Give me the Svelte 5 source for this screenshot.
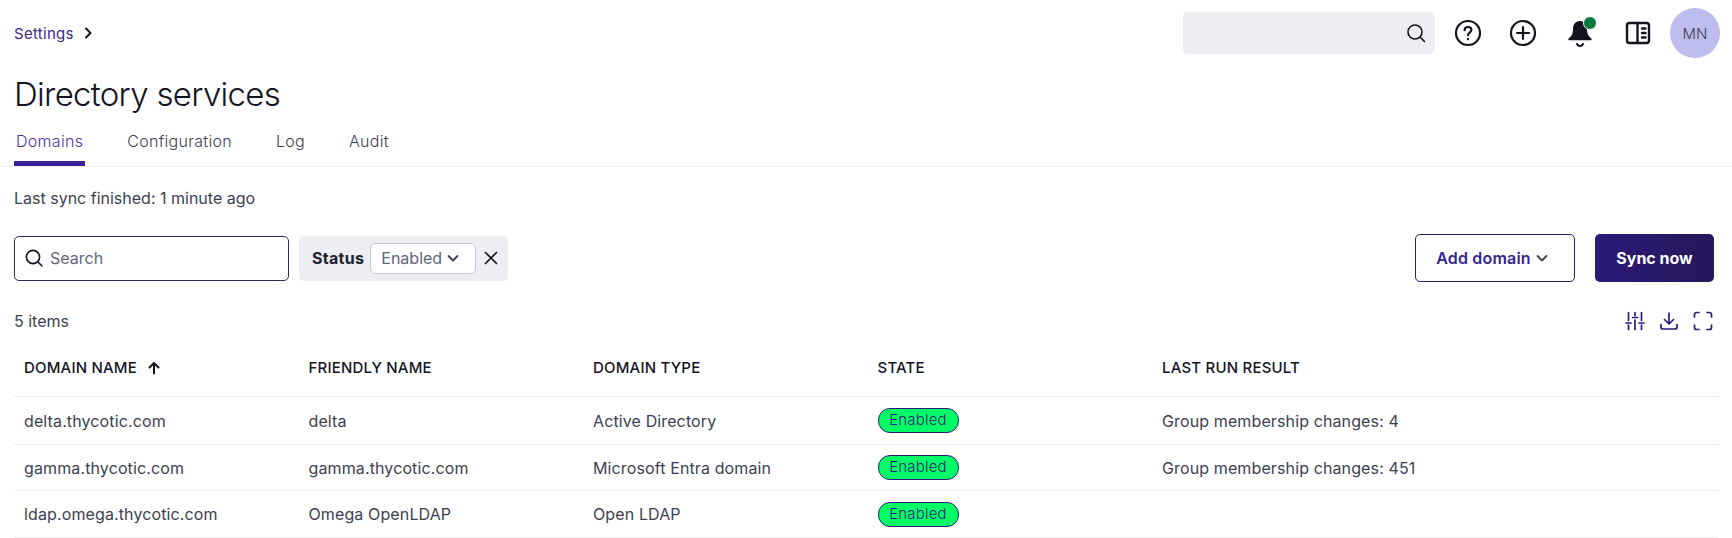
<script>
    let tabs = ["Domains", "Configuration", "Log", "Audit"];

    let columns = ["Domain name", "Friendly name", "Domain type", "State", "Last run result"];

    let domains = [
        { name: "delta.thycotic.com", friendly: "delta", type: "Active Directory", result: "Group membership changes: 4" },
        { name: "gamma.thycotic.com", friendly: "gamma.thycotic.com", type: "Microsoft Entra domain", result: "Group membership changes: 451" },
        { name: "ldap.omega.thycotic.com", friendly: "Omega OpenLDAP", type: "Open LDAP", result: "" }
    ];
</script>

<div class="page">
    <header class="top">
        <nav class="crumbs">
            <a href="#settings">Settings</a>
            <svg width="16" height="16" viewBox="0 0 16 16" fill="none" stroke="#14141f" stroke-width="2" stroke-linecap="round" stroke-linejoin="round"><path d="M6 3.500 10.500 8 6 12.500"/></svg>
        </nav>
        <div class="top-tools">
            <div class="global-search">
                <svg width="22" height="22" viewBox="0 0 22 22" fill="none" stroke="#14141f" stroke-width="1.600" stroke-linecap="round"><circle cx="10" cy="10" r="7"/><path d="m15 15 4.500 4.500"/></svg>
            </div>
            <button class="icon-btn help" aria-label="Help">
                <svg width="28" height="28" viewBox="0 0 28 28" fill="none" stroke="#14141f" stroke-width="2.200" stroke-linecap="round"><circle cx="14" cy="14" r="12"/><path d="M10.600 11.200c0-2 1.500-3.200 3.400-3.200s3.400 1.200 3.400 3c0 2.600-3.400 2.700-3.400 5.200"/><path d="M14 20v.1" stroke-width="2.400"/></svg>
            </button>
            <button class="icon-btn add" aria-label="Add">
                <svg width="28" height="28" viewBox="0 0 28 28" fill="none" stroke="#14141f" stroke-width="2.200" stroke-linecap="round"><circle cx="14" cy="14" r="12"/><path d="M14 8v12M8 14h12"/></svg>
            </button>
            <button class="icon-btn bell" aria-label="Notifications">
                <svg width="28" height="30" viewBox="0 0 28 30" fill="#14141f"><path d="M13 3c-4.800 0-7 3.800-7 8 0 5-1.500 7.200-4.300 9.400-.8.700-.4 1.800.7 1.800h21.200c1.100 0 1.500-1.100.7-1.800C21.500 18.200 20 16 20 11c0-4.200-2.200-8-7-8Z"/><path d="M10 26c.6 1.400 1.600 2 3 2s2.400-.6 3-2" fill="none" stroke="#14141f" stroke-width="2" stroke-linecap="round"/></svg>
                <span class="dot"></span>
            </button>
            <button class="icon-btn panel" aria-label="Panel">
                <svg width="28" height="28" viewBox="0 0 28 28" fill="none" stroke="#14141f" stroke-width="2.400" stroke-linecap="round"><rect x="3" y="4" width="22" height="20" rx="2.500"/><path d="M13.500 4v20"/><path d="M18 9.500h3.500M18 14h3.500M18 18.500h3.500"/></svg>
            </button>
            <div class="avatar">MN</div>
        </div>
    </header>

    <h1>Directory services</h1>

    <div class="tabs">
        {#each tabs as tab, i}
            <div class="tab" class:active={i === 0}>{tab}</div>
        {/each}
    </div>

    <p class="sync-note">Last sync finished: 1 minute ago</p>

    <div class="toolbar">
        <div class="search-box">
            <svg width="20" height="20" viewBox="0 0 20 20" fill="none" stroke="#14141f" stroke-width="1.600" stroke-linecap="round"><circle cx="9" cy="9" r="6.600"/><path d="m14 14 4 4"/></svg>
            <span>Search</span>
        </div>
        <div class="filter-chip">
            <b>Status</b>
            <div class="select">
                Enabled
                <svg width="14" height="14" viewBox="0 0 14 14" fill="none" stroke="#3d3f50" stroke-width="1.800" stroke-linecap="round" stroke-linejoin="round"><path d="m2.500 5 4.500 4.500L11.500 5"/></svg>
            </div>
            <svg class="close" width="16" height="16" viewBox="0 0 16 16" fill="none" stroke="#14141f" stroke-width="1.700" stroke-linecap="round"><path d="m2.500 2.500 11 11M13.500 2.500l-11 11"/></svg>
        </div>
        <div class="actions">
            <button class="outline">
                Add domain
                <svg width="14" height="14" viewBox="0 0 14 14" fill="none" stroke="#3d3f50" stroke-width="1.800" stroke-linecap="round" stroke-linejoin="round"><path d="m2.500 5 4.500 4.500L11.500 5"/></svg>
            </button>
            <button class="primary">Sync now</button>
        </div>
    </div>

    <div class="count-row">
        <span>5 items</span>
        <div class="table-tools">
            <svg width="20" height="20" viewBox="0 0 20 20" fill="none" stroke="#2b1a78" stroke-width="1.700" stroke-linecap="round"><path d="M3.500 1.500v8M3.500 14v4.500M10 1.500v3M10 9v9.500M16.500 1.500v8M16.500 14v4.500M1 12h5M7.500 6.500h5M14 12h5"/></svg>
            <svg width="20" height="20" viewBox="0 0 20 20" fill="none" stroke="#2b1a78" stroke-width="1.700" stroke-linecap="round" stroke-linejoin="round"><path d="M10 2v10.500M5.500 8.500 10 13l4.500-4.500M2 13.500v2.500a2 2 0 0 0 2 2h12a2 2 0 0 0 2-2v-2.500"/></svg>
            <svg width="20" height="20" viewBox="0 0 20 20" fill="none" stroke="#2b1a78" stroke-width="1.700" stroke-linecap="round" stroke-linejoin="round"><path d="M1.500 6V3.500a2 2 0 0 1 2-2H6M14 1.500h2.500a2 2 0 0 1 2 2V6M18.500 14v2.500a2 2 0 0 1-2 2H14M6 18.500H3.500a2 2 0 0 1-2-2V14"/></svg>
        </div>
    </div>

    <table>
        <thead>
            <tr>
                {#each columns as col, i}
                    <th>
                        {col}
                        {#if i === 0}
                            <svg class="sort" width="14" height="14" viewBox="0 0 14 14" fill="none" stroke="#14141f" stroke-width="2" stroke-linecap="round" stroke-linejoin="round"><path d="M7 12.500V2M2.500 6.500 7 2l4.500 4.500"/></svg>
                        {/if}
                    </th>
                {/each}
            </tr>
        </thead>
        <tbody>
            {#each domains as d}
                <tr>
                    <td>{d.name}</td>
                    <td>{d.friendly}</td>
                    <td>{d.type}</td>
                    <td><span class="badge">Enabled</span></td>
                    <td>{d.result}</td>
                </tr>
            {/each}
        </tbody>
    </table>
</div>

<style>
:global(body) {
    margin: 0;
    background: #fff;
    overflow: hidden;
}

.page {
    font-family: Inter, "Open Sans", sans-serif;
    color: #3d3f50;
    font-size: 16px;
    height: 538px;
    overflow: hidden;
}

.top {
    display: flex;
    justify-content: space-between;
    align-items: center;
    height: 66px;
    padding: 0 12px 0 14px;
}

.crumbs {
    display: flex;
    align-items: center;
    gap: 6px;
    font-size: 15px;
    letter-spacing: 0.3px;
}

.crumbs a {
    color: #3c2a8c;
    text-decoration: none;
}

.top-tools {
    display: flex;
    align-items: center;
}

.global-search {
    width: 252px;
    height: 42px;
    box-sizing: border-box;
    background: #edeef2;
    border-radius: 5px;
    display: flex;
    align-items: center;
    justify-content: flex-end;
    padding-right: 8px;
    margin-right: 19px;
}

.icon-btn {
    position: relative;
    width: 28px;
    height: 30px;
    padding: 0;
    border: none;
    background: none;
    display: flex;
    align-items: center;
    justify-content: center;
}

.help {
    margin-right: 27px;
}

.add {
    margin-right: 30px;
}

.bell {
    margin-right: 29px;
}

.panel {
    margin-right: 18px;
}

.dot {
    position: absolute;
    top: -2px;
    right: -2px;
    width: 12px;
    height: 12px;
    background: #0b7a3e;
    border: 1.500px solid #fff;
    border-radius: 50%;
}

.avatar {
    width: 50px;
    height: 50px;
    border-radius: 50%;
    background: #bcbdec;
    color: #3d3f50;
    font-size: 15px;
    font-weight: 300;
    display: flex;
    align-items: center;
    justify-content: center;
}

h1 {
    margin: 6px 0 0;
    padding: 0 14px;
    font-size: 33px;
    line-height: 44px;
    font-weight: 300;
    color: #14141f;
    letter-spacing: -0.7px;
    height: 50px;
    box-sizing: border-box;
}

.tabs {
    display: flex;
    gap: 40px;
    padding: 0 14px;
    height: 44px;
    border-bottom: 1px solid #ededf0;
}

.tab {
    font-size: 16px;
    letter-spacing: 0.3px;
    line-height: 20px;
    padding: 9px 2px 0;
    box-sizing: border-box;
    height: 44px;
    color: #3d3f50;
    font-weight: 300;
}

.tab.active {
    color: #4b32a8;
    border-bottom: 5px solid #3a2296;
}

.sync-note {
    margin: 0;
    padding: 21px 14px 0;
    line-height: 20px;
    height: 67px;
    box-sizing: border-box;
}

.toolbar {
    display: flex;
    align-items: center;
    padding: 0 18px 0 14px;
    height: 48px;
    gap: 10px;
}

.search-box {
    width: 275px;
    height: 45px;
    box-sizing: border-box;
    border: 1px solid #2e2a5c;
    border-radius: 5px;
    display: flex;
    align-items: center;
    gap: 6px;
    padding-left: 9px;
    color: #62647a;
}

.filter-chip {
    height: 45px;
    width: 209px;
    box-sizing: border-box;
    background: #edeef2;
    border-radius: 5px;
    display: flex;
    align-items: center;
    padding-left: 13px;
    gap: 6px;
}

.filter-chip b {
    color: #22222f;
    font-weight: 700;
    letter-spacing: 0.3px;
}

.select {
    width: 106px;
    height: 31px;
    box-sizing: border-box;
    background: #fff;
    border: 1px solid #c8c9d2;
    border-radius: 5px;
    display: flex;
    align-items: center;
    gap: 4px;
    padding-left: 10px;
    color: #62647a;
}

.close {
    margin-left: 1px;
}

.actions {
    margin-left: auto;
    display: flex;
    gap: 20px;
}

button.outline,
button.primary {
    font-family: inherit;
    font-size: 16px;
    height: 48px;
    border-radius: 5px;
    font-weight: 600;
    display: flex;
    align-items: center;
    justify-content: center;
    gap: 4px;
}

button.outline {
    width: 160px;
    padding: 0 5px 0 0;
    background: #fff;
    border: 1px solid #2b1a78;
    color: #35268a;
    letter-spacing: 0.2px;
}

button.primary {
    width: 119px;
    background: linear-gradient(90deg, #2b1a78, #26175a);
    border: none;
    color: #fff;
    font-weight: 700;
}

.count-row {
    display: flex;
    justify-content: space-between;
    align-items: center;
    padding: 0 19px 0 14px;
    height: 30px;
    margin-top: 24px;
}

.table-tools {
    display: flex;
    gap: 14px;
}

table {
    width: 1704px;
    margin-left: 14px;
    border-collapse: collapse;
    table-layout: fixed;
    margin-top: 4px;
}

th {
    text-align: left;
    font-size: 15px;
    font-weight: 500;
    letter-spacing: 0.2px;
    text-transform: uppercase;
    color: #14141f;
    height: 56px;
    padding: 0 10px;
    border-bottom: 1px solid #ededf0;
    box-sizing: border-box;
}

th:nth-child(-n+4) {
    width: 284.500px;
}

.sort {
    vertical-align: -2px;
    margin-left: 6px;
}

td {
    height: 47px;
    padding: 1px 10px 0;
    letter-spacing: 0.12px;
    border-bottom: 1px solid #ededf0;
    box-sizing: border-box;
}

tbody tr:nth-child(1) td {
    height: 48px;
}

tbody tr:nth-child(2) td {
    height: 46px;
}

.badge {
    display: inline-block;
    width: 81px;
    height: 25px;
    box-sizing: border-box;
    line-height: 22px;
    text-align: center;
    font-size: 15px;
    letter-spacing: 0.2px;
    font-weight: 300;
    background: #00ff66;
    border: 1px solid #2b1a78;
    border-radius: 12px;
    color: #2b1a78;
    vertical-align: middle;
}
</style>
